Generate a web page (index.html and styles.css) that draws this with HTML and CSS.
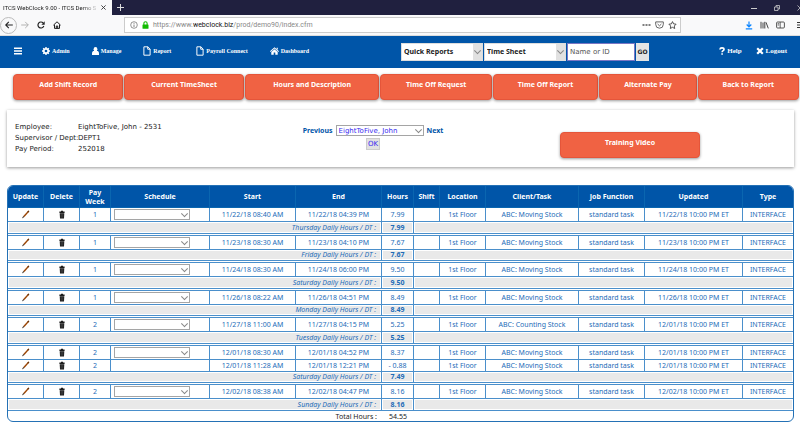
FILE: index.html
```html
<!DOCTYPE html>
<html lang="en">
<head>
<meta charset="utf-8">
<title>ITCS WebClock 9.00</title>
<link rel="stylesheet" href="styles.css">
</head>
<body>
<svg class="sprite" aria-hidden="true">
  <symbol id="pencil" viewBox="0 0 9 9"><path d="M7.3.6 8.3 1.5 3.4 6.9 2.3 6Z" fill="#b4560f"/><path d="M7.3.6 8.3 1.5 7.4 2.5 6.4 1.6Z" fill="#5b3413"/><path d="M2.3 6 3.4 6.9.8 8.4Z" fill="#33261c"/><path d="M7.9 1.1 2.8 6.5" stroke="#6d3308" stroke-width=".5"/></symbol>
  <symbol id="trash" viewBox="0 0 8 9"><path d="M3 .8h2v.8h1.6v1.3H1.4V1.600H3zM1.700 3.200h4.600L6 8.500H2z" fill="#1c1c1c"/><path d="M3.200 4v3.700M4.800 4v3.700" stroke="#666" stroke-width=".5"/></symbol>
  <symbol id="file" viewBox="0 0 9 11"><path d="M1 .8h4.500L8 3.300v6.900H1zM5.300.8v2.700H8" fill="none" stroke="#fff" stroke-width="1.100"/></symbol>
</svg>

<header class="browser">
  <div class="tabs">
    <div class="tab"><span class="tab-title">ITCS WebClock 9.00 - ITCS Demo S</span>
      <button class="icon-btn" aria-label="Close tab"><svg width="5" height="5" viewBox="0 0 5 5"><path d="M.4.4l4.200 4.200M4.600.4.4 4.600" stroke="#333" stroke-width=".9"/></svg></button></div>
    <button class="icon-btn new-tab" aria-label="New tab"><svg width="7" height="7" viewBox="0 0 7 7"><path d="M3.500 0v7M0 3.500h7" stroke="#ddd"/></svg></button>
    <div class="window-buttons">
      <button class="icon-btn" aria-label="Minimize"><svg width="6" height="6" viewBox="0 0 6 6"><path d="M0 3.500h6" stroke="#ccc"/></svg></button>
      <button class="icon-btn" aria-label="Restore"><svg width="6" height="6" viewBox="0 0 6 6"><path d="M.5 2h3.500v3.500H.5zM2 2V.5h3.500V4H4" fill="none" stroke="#ccc" stroke-width=".8"/></svg></button>
      <button class="icon-btn" aria-label="Close"><svg width="6" height="6" viewBox="0 0 6 6"><path d="M.5.500l5 5M5.500.5l-5 5" stroke="#ccc" stroke-width=".8"/></svg></button>
    </div>
  </div>
  <div class="toolbar">
    <button class="icon-btn back" aria-label="Back"><svg width="8" height="8" viewBox="0 0 8 8"><path d="M7.800 4H.8M3.800.9.7 4l3.100 3.100" fill="none" stroke="#222" stroke-width="1.100"/></svg></button>
    <button class="icon-btn" aria-label="Forward"><svg width="8" height="8" viewBox="0 0 8 8"><path d="M.2 4h7M4.200.9 7.300 4 4.200 7.100" fill="none" stroke="#aaa" stroke-width=".9"/></svg></button>
    <button class="icon-btn" aria-label="Reload"><svg width="8" height="8" viewBox="0 0 8 8"><path d="M6.800 5A3 3 0 1 1 6.200 2" fill="none" stroke="#222" stroke-width="1.200"/><path d="M7.700.3v3.400H4.400z" fill="#222"/></svg></button>
    <button class="icon-btn" aria-label="Home"><svg width="8" height="8" viewBox="0 0 8 8"><path d="M.4 4.200 4 .8l3.600 3.400M1.500 3.700v3.700h5V3.700M3.300 7.400V5h1.400v2.400" fill="none" stroke="#222"/></svg></button>
    <div class="address">
      <svg width="8" height="8" viewBox="0 0 8 8"><circle cx="4" cy="4" r="3.300" fill="none" stroke="#666" stroke-width=".7"/><path d="M4 3.500V6M4 1.900v.9" stroke="#666" stroke-width=".8"/></svg>
      <svg width="7" height="8" viewBox="0 0 7 8"><path d="M1.900 4V2.300a1.600 1.600 0 0 1 3.200 0V4" fill="none" stroke="#12bc00" stroke-width="1.100"/><rect x=".5" y="3.500" width="6" height="4.200" rx=".5" fill="#12bc00"/></svg>
      <span class="url">https://www.<b>webclock.biz</b>/prod/demo90/index.cfm</span>
      <button class="icon-btn" aria-label="Page actions"><svg width="9" height="8" viewBox="0 0 9 8"><path d="M.5 4h2M3.500 4h2M6.500 4h2" stroke="#555" stroke-width="1.500"/></svg></button>
      <button class="icon-btn" aria-label="Save to Pocket"><svg width="9" height="8" viewBox="0 0 9 8"><path d="M.7.9h7.600v2.500a3.800 3.800 0 0 1-7.600 0zM2.600 3l1.900 1.800L6.400 3" fill="none" stroke="#555" stroke-width=".9"/></svg></button>
      <button class="icon-btn" aria-label="Bookmark"><svg width="9" height="8" viewBox="0 0 9 8"><path d="M4.500.6l1.100 2.300 2.500.3-1.800 1.800.4 2.500-2.200-1.200-2.200 1.200.4-2.500L.9 3.200l2.500-.3z" fill="none" stroke="#444" stroke-width=".9"/></svg></button>
    </div>
    <div class="tools">
      <button class="icon-btn" aria-label="Downloads"><svg width="8" height="9" viewBox="0 0 8 9"><path d="M4 .5v5M1.700 3.500 4 5.800l2.300-2.300M.8 7.900h6.400" fill="none" stroke="#0a84ff" stroke-width="1.200"/></svg></button>
      <button class="icon-btn" aria-label="Library"><svg width="9" height="8" viewBox="0 0 9 8"><path d="M1 .8v6.700M3 1.500v6M4.800.8v6.700M6 1.300l2.300 6.100" stroke="#444"/></svg></button>
      <button class="icon-btn" aria-label="Sidebars"><svg width="9" height="8" viewBox="0 0 9 8"><rect x=".6" y="1" width="7.800" height="6" rx="1" fill="none" stroke="#444" stroke-width=".9"/><path d="M4.200 1v6M1.700 2.700h1.500M1.700 4h1.500" stroke="#444" stroke-width=".8"/></svg></button>
      <button class="icon-btn menu" aria-label="Menu"><svg width="8" height="8" viewBox="0 0 8 8"><path d="M0 1.500h8M0 4h8M0 6.500h8" stroke="#333"/></svg></button>
    </div>
  </div>
</header>

<nav class="site-nav">
  <div class="links">
    <button class="icon-btn" aria-label="Toggle menu"><svg width="8" height="8" viewBox="0 0 8 8"><path d="M0 1.200h8M0 4h8M0 6.800h8" stroke="#fff" stroke-width="1.500"/></svg></button>
    <a href="#"><svg width="8" height="8" viewBox="0 0 8 8"><circle cx="4" cy="4" r="2.200" fill="none" stroke="#fff" stroke-width="1.700"/><path d="M4 0v1.500M4 6.500V8M0 4h1.500M6.500 4H8M1.200 1.200l1 1M5.800 5.800l1 1M1.200 6.800l1-1M5.800 2.200l1-1" stroke="#fff" stroke-width="1.400"/></svg>Admin</a>
    <a href="#"><svg width="7" height="8" viewBox="0 0 7 8"><ellipse cx="3.500" cy="2.200" rx="1.900" ry="2.200" fill="#fff"/><path d="M0 8V6.200C0 4.700 1 4.100 2 4.100h3c1 0 2 .6 2 2.100V8z" fill="#fff"/></svg>Manage</a>
    <a href="#"><svg width="8" height="10"><use href="#file"/></svg>Report</a>
    <a href="#" class="wide"><svg width="8" height="10"><use href="#file"/></svg>Payroll Connect</a>
    <a href="#"><svg width="9" height="8" viewBox="0 0 9 8"><path d="M4.500.3 9 4.200l-.6.700-3.900-3.400L.6 4.900 0 4.200zM6.600.8h1.200v2L6.600 1.700zM4.500 2.200 7.700 5v2.800H5.300V5.400H3.700v2.400H1.300V5z" fill="#fff"/></svg>Dashboard</a>
  </div>
  <form class="finder">
    <span class="select boxed"><select aria-label="Report group"><option>Quick Reports</option></select></span>
    <span class="select boxed"><select aria-label="Report"><option>Time Sheet</option></select></span>
    <input type="text" placeholder="Name or ID" aria-label="Name or ID">
    <button type="button">GO</button>
  </form>
  <div class="account">
    <a href="#"><svg width="6" height="8" viewBox="0 0 6 8"><path d="M.9 2.500C1 1.300 1.800.9 3 .9s2 .5 2 1.500c0 1.300-1.900 1.200-1.900 2.900M3.100 6.200v1.500" fill="none" stroke="#fff" stroke-width="1.600"/></svg>Help</a>
    <a href="#"><svg width="8" height="8" viewBox="0 0 8 8"><path d="M1.200 1.200l5.600 5.600M6.800 1.200 1.200 6.800" stroke="#fff" stroke-width="2.200"/></svg>Logout</a>
  </div>
</nav>

<main>
  <div class="actions">
    <button class="action">Add Shift Record</button>
    <button class="action">Current TimeSheet</button>
    <button class="action">Hours and Description</button>
    <button class="action">Time Off Request</button>
    <button class="action">Time Off Report</button>
    <button class="action">Alternate Pay</button>
    <button class="action">Back to Report</button>
  </div>

  <section class="card">
    <dl class="facts">
      <dt>Employee:</dt><dd>EightToFive, John - 2531</dd>
      <dt>Supervisor / Dept:</dt><dd>DEPT1</dd>
      <dt>Pay Period:</dt><dd>252018</dd>
    </dl>
    <form class="picker">
      <div class="picker-row">
        <a href="#">Previous</a>
        <span class="select"><select aria-label="Employee"><option>EightToFive, John</option></select></span>
        <a href="#">Next</a>
      </div>
      <button type="button" class="ok">OK</button>
    </form>
    <div class="video"><button class="action">Training Video</button></div>
  </section>

  <div class="sheet">
    <table>
      <colgroup><col class="c-tool"><col class="c-tool"><col class="c-week"><col class="c-schedule"><col class="c-time"><col class="c-time"><col class="c-hours"><col class="c-shift"><col class="c-location"><col class="c-task"><col class="c-job"><col class="c-updated"><col class="c-type"></colgroup>
      <thead>
        <tr><th>Update</th><th>Delete</th><th>Pay Week</th><th>Schedule</th><th>Start</th><th>End</th><th>Hours</th><th>Shift</th><th>Location</th><th>Client/Task</th><th>Job Function</th><th>Updated</th><th>Type</th></tr>
      </thead>
      <tbody>
        <tr class="entry"><td><button class="icon-btn" aria-label="Update"><svg width="9" height="9"><use href="#pencil"/></svg></button></td><td><button class="icon-btn" aria-label="Delete"><svg width="8" height="9"><use href="#trash"/></svg></button></td><td>1</td><td class="pick"><span class="select"><select aria-label="Schedule"><option></option></select></span></td><td>11/22/18 08:40 AM</td><td>11/22/18 04:39 PM</td><td>7.99</td><td></td><td>1st Floor</td><td>ABC: Moving Stock</td><td>standard task</td><td>11/22/18 10:00 PM ET</td><td>INTERFACE</td></tr>
        <tr class="daily"><td colspan="6">Thursday Daily Hours / DT :</td><td>7.99</td><td colspan="6"></td></tr>
        <tr class="gap"><td colspan="13"></td></tr>
      </tbody>
      <tbody>
        <tr class="entry"><td><button class="icon-btn" aria-label="Update"><svg width="9" height="9"><use href="#pencil"/></svg></button></td><td><button class="icon-btn" aria-label="Delete"><svg width="8" height="9"><use href="#trash"/></svg></button></td><td>1</td><td class="pick"><span class="select"><select aria-label="Schedule"><option></option></select></span></td><td>11/23/18 08:30 AM</td><td>11/23/18 04:10 PM</td><td>7.67</td><td></td><td>1st Floor</td><td>ABC: Moving Stock</td><td>standard task</td><td>11/23/18 10:00 PM ET</td><td>INTERFACE</td></tr>
        <tr class="daily"><td colspan="6">Friday Daily Hours / DT :</td><td>7.67</td><td colspan="6"></td></tr>
        <tr class="gap"><td colspan="13"></td></tr>
      </tbody>
      <tbody>
        <tr class="entry"><td><button class="icon-btn" aria-label="Update"><svg width="9" height="9"><use href="#pencil"/></svg></button></td><td><button class="icon-btn" aria-label="Delete"><svg width="8" height="9"><use href="#trash"/></svg></button></td><td>1</td><td class="pick"><span class="select"><select aria-label="Schedule"><option></option></select></span></td><td>11/24/18 08:30 AM</td><td>11/24/18 06:00 PM</td><td>9.50</td><td></td><td>1st Floor</td><td>ABC: Moving Stock</td><td>standard task</td><td>11/24/18 10:00 PM ET</td><td>INTERFACE</td></tr>
        <tr class="daily"><td colspan="6">Saturday Daily Hours / DT :</td><td>9.50</td><td colspan="6"></td></tr>
        <tr class="gap"><td colspan="13"></td></tr>
      </tbody>
      <tbody>
        <tr class="entry"><td><button class="icon-btn" aria-label="Update"><svg width="9" height="9"><use href="#pencil"/></svg></button></td><td><button class="icon-btn" aria-label="Delete"><svg width="8" height="9"><use href="#trash"/></svg></button></td><td>1</td><td class="pick"><span class="select"><select aria-label="Schedule"><option></option></select></span></td><td>11/26/18 08:22 AM</td><td>11/26/18 04:51 PM</td><td>8.49</td><td></td><td>1st Floor</td><td>ABC: Moving Stock</td><td>standard task</td><td>11/26/18 10:00 PM ET</td><td>INTERFACE</td></tr>
        <tr class="daily"><td colspan="6">Monday Daily Hours / DT :</td><td>8.49</td><td colspan="6"></td></tr>
        <tr class="gap"><td colspan="13"></td></tr>
      </tbody>
      <tbody>
        <tr class="entry"><td><button class="icon-btn" aria-label="Update"><svg width="9" height="9"><use href="#pencil"/></svg></button></td><td><button class="icon-btn" aria-label="Delete"><svg width="8" height="9"><use href="#trash"/></svg></button></td><td>2</td><td class="pick"><span class="select"><select aria-label="Schedule"><option></option></select></span></td><td>11/27/18 11:00 AM</td><td>11/27/18 04:15 PM</td><td>5.25</td><td></td><td>1st Floor</td><td>ABC: Counting Stock</td><td>standard task</td><td>12/01/18 10:00 PM ET</td><td>INTERFACE</td></tr>
        <tr class="daily"><td colspan="6">Tuesday Daily Hours / DT :</td><td>5.25</td><td colspan="6"></td></tr>
        <tr class="gap"><td colspan="13"></td></tr>
      </tbody>
      <tbody>
        <tr class="entry"><td><button class="icon-btn" aria-label="Update"><svg width="9" height="9"><use href="#pencil"/></svg></button></td><td><button class="icon-btn" aria-label="Delete"><svg width="8" height="9"><use href="#trash"/></svg></button></td><td>2</td><td class="pick"><span class="select"><select aria-label="Schedule"><option></option></select></span></td><td>12/01/18 08:30 AM</td><td>12/01/18 04:52 PM</td><td>8.37</td><td></td><td>1st Floor</td><td>ABC: Moving Stock</td><td>standard task</td><td>12/01/18 10:00 PM ET</td><td>INTERFACE</td></tr>
        <tr class="entry extra"><td><button class="icon-btn" aria-label="Update"><svg width="9" height="9"><use href="#pencil"/></svg></button></td><td><button class="icon-btn" aria-label="Delete"><svg width="8" height="9"><use href="#trash"/></svg></button></td><td>2</td><td></td><td>12/01/18 11:28 AM</td><td>12/01/18 12:21 PM</td><td>- 0.88</td><td></td><td>1st Floor</td><td>ABC: Moving Stock</td><td>standard task</td><td>12/01/18 10:00 PM ET</td><td>INTERFACE</td></tr>
        <tr class="daily"><td colspan="6">Saturday Daily Hours / DT :</td><td>7.49</td><td colspan="6"></td></tr>
        <tr class="gap"><td colspan="13"></td></tr>
      </tbody>
      <tbody>
        <tr class="entry"><td><button class="icon-btn" aria-label="Update"><svg width="9" height="9"><use href="#pencil"/></svg></button></td><td><button class="icon-btn" aria-label="Delete"><svg width="8" height="9"><use href="#trash"/></svg></button></td><td>2</td><td class="pick"><span class="select"><select aria-label="Schedule"><option></option></select></span></td><td>12/02/18 08:38 AM</td><td>12/02/18 04:47 PM</td><td>8.16</td><td></td><td>1st Floor</td><td>ABC: Moving Stock</td><td>standard task</td><td>12/02/18 10:00 PM ET</td><td>INTERFACE</td></tr>
        <tr class="daily"><td colspan="6">Sunday Daily Hours / DT :</td><td>8.16</td><td colspan="6"></td></tr>
      </tbody>
      <tfoot>
        <tr><td colspan="6">Total Hours :</td><td>54.55</td><td colspan="6"></td></tr>
      </tfoot>
    </table>
  </div>
</main>
</body>
</html>
```
FILE: styles.css
```css
* { box-sizing: border-box; }

:root {
  --blue: #0055a8;
  --line: #4a8fcb;
  --orange: #f06243;
  --sans: "Noto Sans", "Open Sans", sans-serif;
  --wide: "DejaVu Sans", Verdana, sans-serif;
}

body {
  margin: 0;
  background: #fff;
  color: #222;
  font: 7px/10px var(--sans);
  overflow: hidden;
}

button, input, select { font: inherit; color: inherit; margin: 0; }
svg { display: block; flex: none; }
.sprite { display: none; }
a { color: inherit; text-decoration: none; }

.icon-btn {
  display: inline-flex;
  align-items: center;
  justify-content: center;
  padding: 0;
  border: 0;
  background: none;
}

/* Browser window */
.browser { font-family: Roboto, sans-serif; }
.tabs { display: flex; align-items: center; height: 15px; background: #20203f; }
.tab {
  display: flex;
  align-items: center;
  justify-content: space-between;
  width: 112px;
  height: 15px;
  padding: 0 6px 0 3px;
  background: #f9f9fa;
}
.tab-title {
  font-size: 6px;
  white-space: nowrap;
  mask-image: linear-gradient(to right, #000 84%, #0003);
}
.new-tab { margin-left: 5px; }
.window-buttons { display: flex; gap: 17px; margin-left: auto; margin-right: -3px; }

.toolbar {
  display: flex;
  align-items: center;
  gap: 8px;
  height: 21px;
  background: #f9f9fa;
  border-bottom: 1px solid #ddd;
}
.back {
  width: 17px;
  height: 17px;
  border: 1px solid #bbb;
  border-radius: 50%;
  margin-right: -4px;
}
.address {
  display: flex;
  align-items: center;
  gap: 4px;
  flex: 1;
  height: 16px;
  margin-left: 55px;
  padding: 0 3px 0 5px;
  border: 1px solid #ccc;
  background: #fff;
}
.url { flex: 1; color: #888; }
.url b { font-weight: 400; color: #111; }
.tools { display: flex; align-items: center; gap: 7px; margin-left: 56px; margin-right: -5px; }
.menu { margin-left: 5px; }

/* Site navigation */
.site-nav {
  display: grid;
  grid-template-columns: 401fr 248fr 151fr;
  align-items: center;
  height: 32px;
  background: var(--blue);
  color: #fff;
}
.links, .account {
  display: flex;
  align-items: center;
  font: bold 6px/10px "Liberation Serif", serif;
  white-space: nowrap;
}
.links { gap: 22px; padding: 0 0 2px 14px; }
.links > button { margin-right: -2px; }
.links .wide { margin-left: 3px; }
.account { gap: 14px; justify-content: flex-end; padding: 0 13px 2px 0; font-size: 7px; }
.links a, .account a { display: flex; align-items: center; gap: 2px; }

.finder { display: flex; gap: 1px; height: 18px; color: #222; }
.finder .boxed { flex: 1; }
.finder select { padding-left: 3px; font-weight: 700; }
.finder input {
  width: 68px;
  padding: 0 0 0 2px;
  border: 1px solid #7a76c4;
  background: #fff;
  font-family: var(--wide);
}
.finder input::placeholder { color: #555; opacity: 1; }
.finder > button {
  width: 13px;
  padding: 0;
  border: 0;
  background: #e4e4e4;
  font: bold 6px/10px var(--wide);
}

.select { position: relative; display: flex; }
.select select {
  appearance: none;
  width: 100%;
  height: 100%;
  padding: 0 2px;
  border: 1px solid #a5a5a5;
  border-radius: 0;
  background: #fff;
}
.select::after {
  content: "";
  position: absolute;
  top: 50%;
  right: 3px;
  width: 4px;
  height: 4px;
  border: solid #888;
  border-width: 0 1px 1px 0;
  transform: translateY(-75%) rotate(45deg);
  pointer-events: none;
}
.boxed select {
  border-color: #ddd;
  background: linear-gradient(to left, #e1e1e1 9px, #fff 9px);
}

/* Page actions */
.actions {
  display: grid;
  grid-template-columns: 110fr 119fr 134fr 111fr 105fr 97fr 101fr;
  gap: 1px;
  padding: 6px 1px 0 13px;
}
.action {
  height: 26px;
  padding: 0 0 5px;
  border: 1px solid #e5553a;
  border-radius: 4px;
  background: var(--orange);
  box-shadow: 0 1px 3px #0006;
  color: #fff;
  font-weight: 700;
}

.card {
  display: grid;
  grid-template-columns: 236fr 260fr 254fr;
  align-items: start;
  margin: 10px 6px 0 7px;
  padding: 12px 37px 9px 0;
  box-shadow: 0 1px 3px #0006;
  font-family: var(--wide);
}
.facts {
  display: grid;
  grid-template-columns: 63px 1fr;
  margin: 0;
  padding-left: 8px;
  line-height: 11px;
  white-space: nowrap;
}
.facts dd { margin: 0; }
.picker { display: flex; flex-direction: column; align-items: center; gap: 2px; padding-top: 3px; }
.picker-row { display: flex; align-items: center; gap: 3px; }
.picker a { color: var(--blue); font-family: var(--sans); font-weight: 700; }
.picker .select { width: 88px; height: 11px; }
.picker select, .ok { color: #3a2cf0; }
.ok { height: 12px; padding: 0 1px; border: 1px solid #ccc; background: #e1e1e1; }
.video { display: flex; justify-content: center; padding-top: 10px; }
.video .action { width: 140px; font-family: var(--sans); }

/* Time sheet */
.sheet {
  margin: 18px 6px 0 7px;
  border: 1px solid #2471b5;
  border-radius: 6px;
  overflow: hidden;
}
table { width: 100%; table-layout: fixed; border-collapse: separate; border-spacing: 0; }
.c-tool { width: 36px; }
.c-week { width: 31px; }
.c-schedule { width: 99px; }
.c-time { width: 86px; }
.c-hours { width: 32px; }
.c-shift { width: 26px; }
.c-location { width: 46px; }
.c-task { width: 93px; }
.c-job { width: 66px; }
.c-updated { width: 98px; }
.c-type { width: 50px; }

th, td {
  padding: 0;
  border: solid var(--line);
  border-width: 0 1px 1px 0;
  text-align: center;
  vertical-align: middle;
  white-space: nowrap;
}
th:last-child, td:last-child { border-right: 0; }
th {
  height: 22px;
  border-color: #0a66b0;
  background: var(--blue);
  color: #fff;
  line-height: 9px;
  white-space: normal;
}
td { color: #1d6cb8; }
td .icon-btn { display: flex; margin: 0 auto; }
.entry td { height: 14px; }
.extra td { height: 12px; }
.pick { padding: 0 19px 0 3px; }
.pick .select { height: 11px; }
.daily td {
  height: 12px;
  background: #e9e9e9;
  box-shadow: inset 0 0 0 1px #fff;
}
tbody:nth-of-type(even) .daily td { height: 11px; }
.daily td:first-child, tfoot td:first-child { padding-right: 5px; text-align: right; }
.daily td:first-child { font-style: italic; }
.daily td:nth-child(2) { font-weight: 700; }
.gap td { height: 2px; }
tfoot td { height: 10px; border: 0; color: #222; line-height: 9px; }
```
